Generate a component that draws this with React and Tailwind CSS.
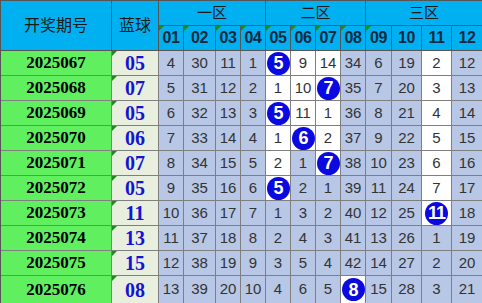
import React from 'react';

// one row per draw: [period, blue, 12 numbers]; "b" marks a hit ball, "w" a white cell
const rows = [
  ['2025067', '05', [4, 30, 11, 1, 'b5', 'w9', 'w14', 34, 6, 19, 'w2', 12]],
  ['2025068', '07', [5, 31, 12, 2, 'w1', 'w10', 'b7', 35, 7, 20, 'w3', 13]],
  ['2025069', '05', [6, 32, 13, 3, 'b5', 'w11', 'w1', 36, 8, 21, 'w4', 14]],
  ['2025070', '06', [7, 33, 14, 4, 'w1', 'b6', 'w2', 37, 9, 22, 'w5', 15]],
  ['2025071', '07', [8, 34, 15, 5, 'w2', 1, 'b7', 38, 10, 23, 'w6', 16]],
  ['2025072', '05', [9, 35, 16, 6, 'b5', 2, 1, 39, 11, 24, 'w7', 17]],
  ['2025073', '11', [10, 36, 17, 7, 1, 3, 2, 40, 12, 25, 'b11', 18]],
  ['2025074', '13', [11, 37, 18, 8, 2, 4, 3, 41, 13, 26, 1, 19]],
  ['2025075', '15', [12, 38, 19, 9, 3, 5, 4, 42, 14, 27, 2, 20]],
  ['2025076', '08', [13, 39, 20, 10, 4, 6, 5, 'b8', 15, 28, 3, 21]],
];

const heads = ['01', '02', '03', '04', '05', '06', '07', '08', '09', '10', '11', '12'];

function Tri() {
  return <div className="absolute left-0 top-0 w-0 h-0 border-t-[5px] border-r-[5px] border-t-[#1f8a1f] border-r-transparent" />;
}

function NumCell({ v }) {
  const s = String(v);
  if (s[0] === 'b') {
    return (
      <div className="flex items-center justify-center bg-white border-r border-b border-[#7f7f7f]">
        <div className="w-[23px] h-[23px] rounded-full bg-[#0a0ae0] flex items-center justify-center text-white font-bold text-[18px] tracking-[-1px] leading-none">
          {s.slice(1)}
        </div>
      </div>
    );
  }
  const white = s[0] === 'w';
  return (
    <div className={`flex items-center justify-center border-r border-b border-[#7f7f7f] text-[15px] text-[#333] ${white ? 'bg-white' : 'bg-[#b8c7e6]'}`}>
      {white ? s.slice(1) : s}
    </div>
  );
}

export default function App() {
  return (
    <div className="w-[482px] h-[303px] overflow-hidden bg-white" style={{ fontFamily: '"Liberation Sans", "Noto Sans CJK SC", sans-serif' }}>
      <div className="grid grid-cols-[111px_47px_25px_32px_25px_25px_25px_25px_25px_25px_26px_30px_30px_31px] grid-rows-[25px_25px_repeat(9,25px)_28px] border-l border-t border-[#555]">
        <div className="row-span-2 flex items-center justify-center bg-[#00b0f0] border-r border-b border-[#555] text-[16px] text-[#1a1a1a]">开奖期号</div>
        <div className="row-span-2 flex items-center justify-center bg-[#00b0f0] border-r border-b border-[#555] text-[16px] text-[#1a1a1a]">蓝球</div>
        <div className="col-span-4 flex items-center justify-center bg-[#00b0f0] border-r border-b border-[#555] text-[15px] text-[#1a1a1a]">一区</div>
        <div className="col-span-4 flex items-center justify-center bg-[#00b0f0] border-r border-b border-[#555] text-[15px] text-[#1a1a1a]">二区</div>
        <div className="col-span-4 flex items-center justify-center bg-[#00b0f0] border-r border-b border-[#555] text-[15px] text-[#1a1a1a]">三区</div>
        {heads.map((h, i) => (
          <div key={h} className="relative flex items-center justify-center bg-[#00b0f0] border-r border-b border-[#555] text-[16px] font-bold text-[#0f2a40] tracking-[-0.5px]">
            {i < 9 && <Tri />}
            {h}
          </div>
        ))}
        {rows.map(([p, blue, nums]) => (
          <React.Fragment key={p}>
            <div className="flex items-center justify-center bg-[#5fef5f] border-r border-b border-[#7f7f7f] text-[17px] font-bold text-black" style={{ fontFamily: '"Liberation Serif", serif' }}>{p}</div>
            <div className="relative flex items-center justify-center bg-[#e8efdf] border-r border-b border-[#7f7f7f] text-[20px] font-bold text-[#1414d2]" style={{ fontFamily: '"Liberation Serif", serif' }}>
              <Tri />
              {blue}
            </div>
            {nums.map((v, j) => <NumCell key={j} v={v} />)}
          </React.Fragment>
        ))}
      </div>
    </div>
  );
}
